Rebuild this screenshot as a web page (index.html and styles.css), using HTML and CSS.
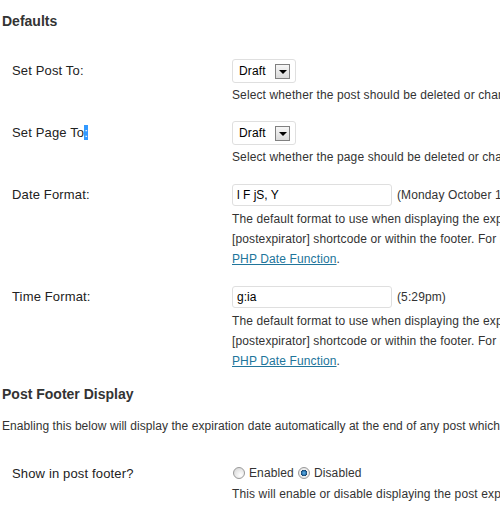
FILE: index.html
```html
<!DOCTYPE html>
<html lang="en">
<head>
    <meta charset="UTF-8">
    <meta name="viewport" content="width=device-width, initial-scale=1.0">
    <title>Post Expirator Options</title>
    <link rel="stylesheet" href="styles.css">
</head>
<body>
    <div class="wrap">
        <h3 class="section-title first">Defaults</h3>

        <table class="form-table">
            <tr>
                <th>Set Post To:</th>
                <td>
                    <div class="field">
                        <span class="select">
                            <span class="select-value">Draft</span>
                            <span class="select-arrow"></span>
                        </span>
                    </div>
                    <div class="description">Select whether the post should be deleted or changed to a draft at expiration time.</div>
                </td>
            </tr>
            <tr>
                <th>Set Page To<span class="selected">:</span></th>
                <td>
                    <div class="field">
                        <span class="select">
                            <span class="select-value">Draft</span>
                            <span class="select-arrow"></span>
                        </span>
                    </div>
                    <div class="description">Select whether the page should be deleted or changed to a draft at expiration time.</div>
                </td>
            </tr>
            <tr>
                <th>Date Format:</th>
                <td>
                    <div class="field">
                        <input type="text" class="text-input" value="l F jS, Y">
                        <span class="example">(Monday October 17, 2011)</span>
                    </div>
                    <div class="description">
                        The default format to use when displaying the expiration date within a post using the<br>
                        [postexpirator] shortcode or within the footer. For information on valid formatting options, see:<br>
                        <a href="#">PHP Date Function</a>.
                    </div>
                </td>
            </tr>
            <tr>
                <th>Time Format:</th>
                <td>
                    <div class="field">
                        <input type="text" class="text-input" value="g:ia">
                        <span class="example">(5:29pm)</span>
                    </div>
                    <div class="description">
                        The default format to use when displaying the expiration time within a post using the<br>
                        [postexpirator] shortcode or within the footer. For information on valid formatting options, see:<br>
                        <a href="#">PHP Date Function</a>.
                    </div>
                </td>
            </tr>
        </table>

        <h3 class="section-title">Post Footer Display</h3>
        <p class="intro">Enabling this below will display the expiration date automatically at the end of any post which is set to expire.</p>

        <table class="form-table footer-table">
            <tr>
                <th>Show in post footer?</th>
                <td>
                    <div class="field radios">
                        <input type="radio" name="footer" id="footerOn"><label for="footerOn">Enabled</label>
                        <input type="radio" name="footer" id="footerOff" checked><label for="footerOff">Disabled</label>
                    </div>
                    <div class="description">This will enable or disable displaying the post expiration date in the post footer.</div>
                </td>
            </tr>
        </table>
    </div>
</body>
</html>
```

FILE: styles.css
```css
/* Basic page */
body {
    margin: 0;
    background: #fff;
    font-family: Arial, "Liberation Sans", sans-serif;
    color: #333;
    overflow: hidden;
}

.wrap {
    width: 820px;
    padding-left: 2px;
}

/* Section headings */
.section-title {
    font-size: 14px;
    line-height: 16px;
    font-weight: bold;
    color: #333;
    margin: 12px 0 0;
}

.section-title.first {
    margin-top: 13px;
}

.intro {
    font-size: 12px;
    line-height: 20px;
    letter-spacing: 0.06px;
    margin: 14px 0 0;
}

/* Options table */
.form-table {
    border-collapse: collapse;
    width: 100%;
    margin-top: 22px;
    margin-bottom: -5px;
}

.footer-table {
    margin-top: 18px;
}

.form-table th {
    width: 200px;
    padding: 10px;
    text-align: left;
    vertical-align: top;
    font-weight: normal;
    font-size: 13px;
    line-height: 20px;
    letter-spacing: 0.15px;
    color: #222;
}

.form-table td {
    padding: 8px 10px;
    vertical-align: top;
    font-size: 12px;
    line-height: 20px;
    letter-spacing: 0.12px;
    white-space: nowrap;
}

.selected {
    background: #3399ff;
    color: #fff;
}

.field {
    display: flex;
    align-items: center;
    height: 24px;
    margin-bottom: 2px;
}

/* Dropdown */
.select {
    display: flex;
    align-items: center;
    gap: 9px;
    height: 22px;
    padding: 0 5px 0 6px;
    border: 1px solid #dfdfdf;
    border-radius: 3px;
    background: #fff;
    color: #000;
}

.select-arrow {
    width: 13px;
    height: 13px;
    border: 1px solid #808080;
    background: linear-gradient(#f6f6f6, #dadada);
    position: relative;
}

.select-arrow::after {
    content: "";
    position: absolute;
    left: 3px;
    top: 5px;
    border-left: 4px solid transparent;
    border-right: 4px solid transparent;
    border-top: 4px solid #000;
}

/* Text inputs */
.text-input {
    box-sizing: border-box;
    width: 160px;
    height: 22px;
    padding: 0 4px;
    border: 1px solid #dfdfdf;
    border-radius: 3px;
    font-family: inherit;
    font-size: 12px;
    color: #000;
    margin: 0;
}

.example {
    margin-left: 5px;
}

.description a {
    color: #21759b;
}

/* Radio buttons */
.radios {
    height: 22px;
    margin-bottom: 0;
    font-size: 12px;
}

.radios input {
    appearance: none;
    -webkit-appearance: none;
    width: 12px;
    height: 12px;
    margin: 0 4px 0 1px;
    border: 1px solid #9a9a9a;
    border-radius: 50%;
    background: radial-gradient(circle at 65% 70%, #fff 0%, #e4e4e4 60%, #cfcfcf 100%);
    box-sizing: border-box;
}

.radios input:checked {
    background: radial-gradient(circle, #6ab4e8 0, #2b78b4 2px, #173f66 3px, #f0f0f0 3.5px, #d8d8d8 100%);
}

.radios label {
    margin-right: 3px;
}
```
